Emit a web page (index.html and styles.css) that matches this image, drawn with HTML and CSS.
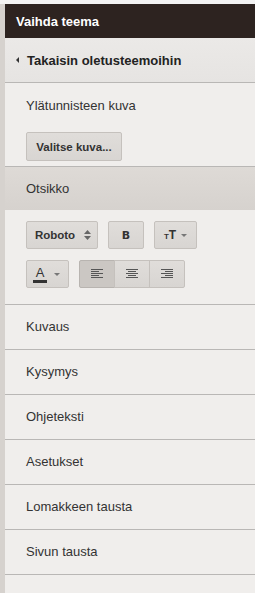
FILE: index.html
```html
<!DOCTYPE html>
<html lang="fi">
<head>
  <meta charset="UTF-8">
  <meta name="viewport" content="width=device-width, initial-scale=1.0">
  <title>Vaihda teema</title>
  <link rel="stylesheet" href="styles.css">
</head>
<body>
  <div class="panel">
    <div class="panel-title">Vaihda teema</div>

    <div class="back-row">
      <span class="back-arrow"></span>
      <span>Takaisin oletusteemoihin</span>
    </div>

    <div class="section">
      <div class="section-label">Ylätunnisteen kuva</div>
      <button class="btn btn-text">Valitse kuva...</button>
    </div>

    <div class="section-head">Otsikko</div>
    <div class="toolbar">
      <div class="tool-row">
        <button class="btn btn-font">
          Roboto
          <svg width="7" height="10" viewBox="0 0 7 10"><path d="M0 4 L3.5 0 L7 4 Z M0 6 L3.5 10 L7 6 Z" fill="#666"/></svg>
        </button>
        <button class="btn btn-bold">B</button>
        <button class="btn btn-size">
          <span class="size-icon"><span class="size-small">T</span><span class="size-big">T</span></span>
          <span class="caret"></span>
        </button>
      </div>
      <div class="tool-row">
        <button class="btn btn-color">
          <span class="color-a">A</span>
          <span class="caret"></span>
        </button>
        <div class="btn-group">
          <button class="btn btn-align active">
            <svg width="12" height="10" viewBox="0 0 12 10"><path d="M0 0.5h12M0 2.5h8M0 4.5h12M0 6.5h8M0 8.5h12" stroke="#555" stroke-width="1"/></svg>
          </button>
          <button class="btn btn-align">
            <svg width="12" height="10" viewBox="0 0 12 10"><path d="M0 0.5h12M2 2.5h8M0 4.5h12M2 6.5h8M0 8.5h12" stroke="#555" stroke-width="1"/></svg>
          </button>
          <button class="btn btn-align">
            <svg width="12" height="10" viewBox="0 0 12 10"><path d="M0 0.5h12M4 2.5h8M0 4.5h12M4 6.5h8M0 8.5h12" stroke="#555" stroke-width="1"/></svg>
          </button>
        </div>
      </div>
    </div>

    <div class="item">Kuvaus</div>
    <div class="item">Kysymys</div>
    <div class="item">Ohjeteksti</div>
    <div class="item">Asetukset</div>
    <div class="item">Lomakkeen tausta</div>
    <div class="item">Sivun tausta</div>
  </div>
</body>
</html>
```

FILE: styles.css
```css
body {
  margin: 0;
  background-color: #f3f3f3;
  font-family: "Liberation Sans", Arial, sans-serif;
  font-size: 13px;
  color: #333;
}

.panel {
  margin-top: 4px;
  min-height: 589px;
  border-left: 5px solid #d6d2ce;
  background-color: #f0eeec;
}

.panel-title {
  height: 34px;
  line-height: 36px;
  padding-left: 11px;
  background-color: #2d2320;
  color: #fff;
  font-weight: bold;
}

.back-row {
  display: flex;
  align-items: center;
  height: 44px;
  padding-left: 11px;
  background: linear-gradient(#ebe9e7, #e6e4e2);
  border-bottom: 1px solid #b9b7b5;
  font-weight: bold;
  color: #222;
}

.back-arrow {
  width: 0;
  height: 0;
  margin-right: 8px;
  border-top: 3px solid transparent;
  border-bottom: 3px solid transparent;
  border-right: 3px solid #333;
}

.section {
  padding: 0 0 5px 21px;
  border-bottom: 1px solid #b9b7b5;
}

.section-label {
  height: 44px;
  line-height: 46px;
}

.btn {
  display: inline-flex;
  align-items: center;
  justify-content: center;
  height: 28px;
  margin: 0;
  padding: 0;
  background: linear-gradient(#e0ddda, #d8d5d2);
  border: 1px solid #c5c1bd;
  border-radius: 2px;
  font-family: "Liberation Sans", Arial, sans-serif;
  font-size: 11px;
  font-weight: bold;
  color: #333;
  box-sizing: border-box;
}

.btn-text {
  margin-top: 5px;
  width: 96px;
  height: 29px;
  font-size: 11.5px;
}

.section-head {
  height: 43px;
  line-height: 44px;
  padding-left: 21px;
  background: linear-gradient(#dedad6, #d6d2ce);
}

.toolbar {
  display: flex;
  flex-direction: column;
  gap: 11px;
  padding: 11px 0 16px 21px;
  border-bottom: 1px solid #b9b7b5;
}

.tool-row {
  display: flex;
  gap: 10px;
}

.btn-font {
  width: 72px;
  gap: 9px;
  font-size: 11.5px;
  padding-left: 2px;
}

.btn-bold {
  width: 36px;
  font-family: "DejaVu Sans", sans-serif;
  font-size: 11px;
  font-weight: bold;
  color: #333;
}

.btn-size {
  width: 43px;
  gap: 3px;
}

.size-icon {
  display: inline-flex;
  align-items: baseline;
}

.size-small {
  font-size: 8px;
}

.size-big {
  font-size: 12px;
}

.caret {
  width: 0;
  height: 0;
  margin-left: 2px;
  border-left: 3px solid transparent;
  border-right: 3px solid transparent;
  border-top: 3px solid #777;
}

.btn-color {
  width: 43px;
  gap: 5px;
  padding-right: 2px;
}

.color-a {
  font-size: 13px;
  font-weight: normal;
  line-height: 14px;
  padding: 0 3px;
  border-bottom: 3px solid #333;
}

.btn-group {
  display: flex;
}

.btn-align {
  width: 36px;
  border-radius: 0;
}

.btn-align + .btn-align {
  margin-left: -1px;
}

.btn-align:first-child {
  border-radius: 2px 0 0 2px;
}

.btn-align:last-child {
  border-radius: 0 2px 2px 0;
}

.btn-align.active {
  background: #cbc7c3;
  border-color: #b8b4b0;
}

.item {
  height: 44px;
  line-height: 44px;
  padding-left: 21px;
  border-bottom: 1px solid #b9b7b5;
}
```
